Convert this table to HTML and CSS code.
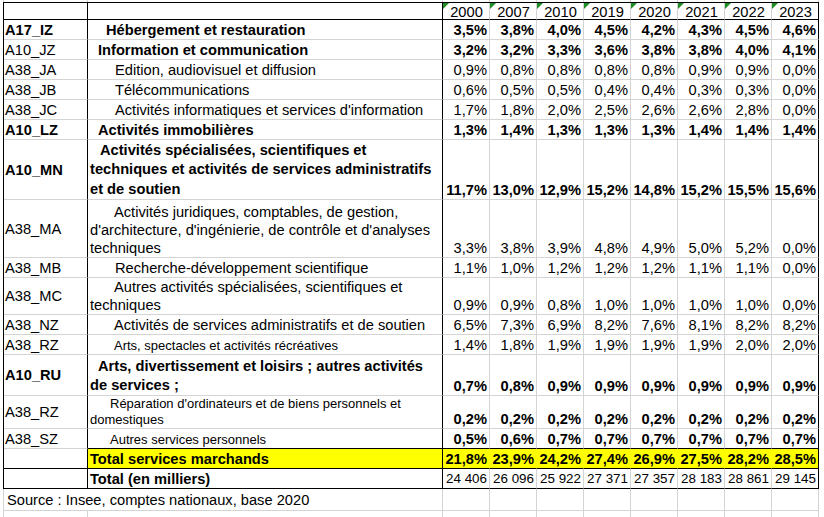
FILE: index.html
```html
<!DOCTYPE html>
<html lang="fr">
<head>
<meta charset="utf-8">
<title>Emploi services marchands</title>
<link rel="stylesheet" href="styles.css">
</head>
<body>
<div class="sheet">
  <div class="row ghost g-top">
    <div class="c"></div><div class="c"></div><div class="c"></div><div class="c"></div><div class="c"></div><div class="c"></div><div class="c"></div><div class="c"></div><div class="c"></div><div class="c"></div>
  </div>

  <div class="tbl">
    <div class="row h-head">
      <div class="c code"></div><div class="c lbl"></div>
      <div class="c yr">2000</div><div class="c yr">2007</div><div class="c yr">2010</div><div class="c yr">2019</div><div class="c yr">2020</div><div class="c yr">2021</div><div class="c yr">2022</div><div class="c yr last">2023</div>
    </div>

    <div class="row b">
      <div class="c code bold">A17_IZ</div><div class="c lbl bold i16"><span>Hébergement et restauration</span></div>
      <div class="c num">3,5%</div><div class="c num">3,8%</div><div class="c num">4,0%</div><div class="c num">4,5%</div><div class="c num">4,2%</div><div class="c num">4,3%</div><div class="c num">4,5%</div><div class="c num last">4,6%</div>
    </div>

    <div class="row b">
      <div class="c code">A10_JZ</div><div class="c lbl bold i8"><span>Information et communication</span></div>
      <div class="c num">3,2%</div><div class="c num">3,2%</div><div class="c num">3,3%</div><div class="c num">3,6%</div><div class="c num">3,8%</div><div class="c num">3,8%</div><div class="c num">4,0%</div><div class="c num last">4,1%</div>
    </div>

    <div class="row">
      <div class="c code">A38_JA</div><div class="c lbl i25"><span>Edition, audiovisuel et diffusion</span></div>
      <div class="c num">0,9%</div><div class="c num">0,8%</div><div class="c num">0,8%</div><div class="c num">0,8%</div><div class="c num">0,8%</div><div class="c num">0,9%</div><div class="c num">0,9%</div><div class="c num last">0,0%</div>
    </div>

    <div class="row">
      <div class="c code">A38_JB</div><div class="c lbl i25"><span>Télécommunications</span></div>
      <div class="c num">0,6%</div><div class="c num">0,5%</div><div class="c num">0,5%</div><div class="c num">0,4%</div><div class="c num">0,4%</div><div class="c num">0,3%</div><div class="c num">0,3%</div><div class="c num last">0,0%</div>
    </div>

    <div class="row">
      <div class="c code">A38_JC</div><div class="c lbl i25"><span>Activités informatiques et services d'information</span></div>
      <div class="c num">1,7%</div><div class="c num">1,8%</div><div class="c num">2,0%</div><div class="c num">2,5%</div><div class="c num">2,6%</div><div class="c num">2,6%</div><div class="c num">2,8%</div><div class="c num last">0,0%</div>
    </div>

    <div class="row b">
      <div class="c code bold">A10_LZ</div><div class="c lbl bold i8"><span>Activités immobilières</span></div>
      <div class="c num">1,3%</div><div class="c num">1,4%</div><div class="c num">1,3%</div><div class="c num">1,3%</div><div class="c num">1,3%</div><div class="c num">1,4%</div><div class="c num">1,4%</div><div class="c num last">1,4%</div>
    </div>

    <div class="row b h-mn">
      <div class="c code bold">A10_MN</div><div class="c lbl bold wrapb i10"><span>Activités spécialisées, scientifiques et techniques et activités de services administratifs et de soutien</span></div>
      <div class="c num">11,7%</div><div class="c num">13,0%</div><div class="c num">12,9%</div><div class="c num">15,2%</div><div class="c num">14,8%</div><div class="c num">15,2%</div><div class="c num">15,5%</div><div class="c num last">15,6%</div>
    </div>

    <div class="row h-ma">
      <div class="c code">A38_MA</div><div class="c lbl i24"><span>Activités juridiques, comptables, de gestion, d'architecture, d'ingénierie, de contrôle et d'analyses techniques</span></div>
      <div class="c num">3,3%</div><div class="c num">3,8%</div><div class="c num">3,9%</div><div class="c num">4,8%</div><div class="c num">4,9%</div><div class="c num">5,0%</div><div class="c num">5,2%</div><div class="c num last">0,0%</div>
    </div>

    <div class="row">
      <div class="c code">A38_MB</div><div class="c lbl i25"><span>Recherche-développement scientifique</span></div>
      <div class="c num">1,1%</div><div class="c num">1,0%</div><div class="c num">1,2%</div><div class="c num">1,2%</div><div class="c num">1,2%</div><div class="c num">1,1%</div><div class="c num">1,1%</div><div class="c num last">0,0%</div>
    </div>

    <div class="row h-mc">
      <div class="c code">A38_MC</div><div class="c lbl wrapr i24"><span>Autres activités spécialisées, scientifiques et techniques</span></div>
      <div class="c num">0,9%</div><div class="c num">0,9%</div><div class="c num">0,8%</div><div class="c num">1,0%</div><div class="c num">1,0%</div><div class="c num">1,0%</div><div class="c num">1,0%</div><div class="c num last">0,0%</div>
    </div>

    <div class="row">
      <div class="c code">A38_NZ</div><div class="c lbl i24"><span>Activités de services administratifs et de soutien</span></div>
      <div class="c num">6,5%</div><div class="c num">7,3%</div><div class="c num">6,9%</div><div class="c num">8,2%</div><div class="c num">7,6%</div><div class="c num">8,1%</div><div class="c num">8,2%</div><div class="c num last">8,2%</div>
    </div>

    <div class="row">
      <div class="c code">A38_RZ</div><div class="c lbl small i24"><span>Arts, spectacles et activités récréatives</span></div>
      <div class="c num">1,4%</div><div class="c num">1,8%</div><div class="c num">1,9%</div><div class="c num">1,9%</div><div class="c num">1,9%</div><div class="c num">1,9%</div><div class="c num">2,0%</div><div class="c num last">2,0%</div>
    </div>

    <div class="row b h-ru">
      <div class="c code bold">A10_RU</div><div class="c lbl bold wrapb i8"><span>Arts, divertissement et loisirs ; autres activités de services ;</span></div>
      <div class="c num">0,7%</div><div class="c num">0,8%</div><div class="c num">0,9%</div><div class="c num">0,9%</div><div class="c num">0,9%</div><div class="c num">0,9%</div><div class="c num">0,9%</div><div class="c num last">0,9%</div>
    </div>

    <div class="row b h-rz">
      <div class="c code">A38_RZ</div><div class="c lbl small i20"><span>Réparation d'ordinateurs et de biens personnels et domestiques</span></div>
      <div class="c num">0,2%</div><div class="c num">0,2%</div><div class="c num">0,2%</div><div class="c num">0,2%</div><div class="c num">0,2%</div><div class="c num">0,2%</div><div class="c num">0,2%</div><div class="c num last">0,2%</div>
    </div>

    <div class="row b pre-total">
      <div class="c code">A38_SZ</div><div class="c lbl small i20"><span>Autres services personnels</span></div>
      <div class="c num">0,5%</div><div class="c num">0,6%</div><div class="c num">0,7%</div><div class="c num">0,7%</div><div class="c num">0,7%</div><div class="c num">0,7%</div><div class="c num">0,7%</div><div class="c num last">0,7%</div>
    </div>

    <div class="row b total">
      <div class="c code"></div><div class="c lbl bold hl"><span>Total services marchands</span></div>
      <div class="c num hl">21,8%</div><div class="c num hl">23,9%</div><div class="c num hl">24,2%</div><div class="c num hl">27,4%</div><div class="c num hl">26,9%</div><div class="c num hl">27,5%</div><div class="c num hl">28,2%</div><div class="c num hl last">28,5%</div>
    </div>

    <div class="row end">
      <div class="c code"></div><div class="c lbl bold"><span>Total (en milliers)</span></div>
      <div class="c num k">24&nbsp;406</div><div class="c num k">26&nbsp;096</div><div class="c num k">25&nbsp;922</div><div class="c num k">27&nbsp;371</div><div class="c num k">27&nbsp;357</div><div class="c num k">28&nbsp;183</div><div class="c num k">28&nbsp;861</div><div class="c num k last">29&nbsp;145</div>
    </div>
  </div>

  <div class="row ghost g-src">
    <div class="c src">Source : Insee, comptes nationaux, base 2020</div>
    <div class="c"></div><div class="c"></div><div class="c"></div><div class="c"></div><div class="c"></div><div class="c"></div><div class="c"></div><div class="c"></div>
  </div>
  <div class="row ghost g-bot">
    <div class="c"></div><div class="c"></div><div class="c"></div><div class="c"></div><div class="c"></div><div class="c"></div><div class="c"></div><div class="c"></div><div class="c"></div><div class="c"></div>
  </div>
</div>
</body>
</html>
```

FILE: styles.css
```css
html, body {
  margin: 0;
  padding: 0;
  background: #ffffff;
}

body {
  font-family: "Liberation Sans", Arial, sans-serif;
  font-size: 14.67px;
  color: #000000;
  overflow: hidden;
}

.sheet {
  width: 824px;
  height: 517px;
  overflow: hidden;
}

.row {
  display: grid;
  grid-template-columns: 84px 355px repeat(8, 47px);
  height: 20px;
  line-height: 18px;
}

.tbl {
  margin-left: 3px;
  width: max-content;
  border-left: 1px solid #000;
  border-top: 1px solid #000;
}

.ghost {
  margin-left: 3px;
  width: max-content;
  border-left: 1px solid #d4d4d4;
}

.c {
  box-sizing: border-box;
  border-right: 1px solid #d4d4d4;
  border-bottom: 1px solid #d4d4d4;
  display: flex;
  align-items: flex-end;
  overflow: hidden;
  white-space: nowrap;
  min-width: 0;
}

.code {
  border-right-color: #000;
  padding-left: 1px;
  align-items: center;
}

.lbl {
  border-right-color: #000;
  padding-left: 2px;
  white-space: normal;
}

.lbl span {
  display: block;
  width: 100%;
}

.num {
  justify-content: flex-end;
  padding-right: 2px;
}

.num.k {
  font-size: 13.4px;
}

.last {
  border-right-color: #000;
}

.b .num,
.bold {
  font-weight: bold;
}

.i8 { text-indent: 8px; }
.i10 { text-indent: 10px; }
.i16 { text-indent: 16px; }
.i20 { text-indent: 20px; }
.i24 { text-indent: 24px; }
.i25 { text-indent: 25px; }

.small {
  font-size: 13px;
  line-height: 16px;
}

.wrapb { line-height: 19.5px; }
.wrapr { line-height: 17.5px; }

/* row heights (include 1px bottom grid line) */
.h-head { height: 17px; }
.h-mn { height: 60px; }
.h-ma { height: 58px; }
.h-mc { height: 37px; }
.h-ru { height: 41px; }
.h-rz { height: 33px; }

.h-ru .wrapb { line-height: 19px; }

.h-head .c {
  border-bottom-color: #000;
  align-items: flex-start;
  line-height: 16px;
  padding-top: 1px;
}

.yr {
  position: relative;
  justify-content: center;
  padding-left: 1px;
}

.yr::before {
  content: "";
  position: absolute;
  left: 0;
  top: 0;
  width: 0;
  height: 0;
  border-top: 6px solid #1f8b24;
  border-right: 6px solid transparent;
}

.pre-total .lbl,
.pre-total .num {
  border-bottom-color: #000;
}

.hl {
  background: #ffff00;
}

.total .c {
  border-bottom-color: #000;
}

.total .num:not(.last) {
  border-right-color: #ffff00;
}

.end .c {
  border-bottom-color: #000;
}

/* ghost grid rows outside the bordered table */
.g-top { height: 2px; }
.g-top .c { border-bottom: 0; }

.g-src { height: 22px; }
.g-src .src {
  grid-column: 1 / span 2;
  padding-left: 3px;
  padding-bottom: 1px;
  overflow: visible;
}

.g-bot { height: 7px; }
.g-bot .c { border-bottom: 0; }
```
